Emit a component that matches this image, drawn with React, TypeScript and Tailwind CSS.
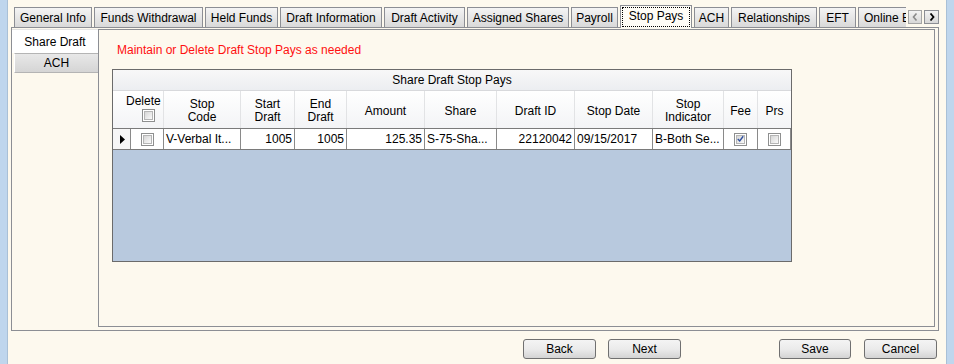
import React from "react"

const tabs = [
    { label: "General Info", w: "w-[78px]" },
    { label: "Funds Withdrawal", w: "w-[109px]" },
    { label: "Held Funds", w: "w-[73px]" },
    { label: "Draft Information", w: "w-[102px]" },
    { label: "Draft Activity", w: "w-[81px]" },
    { label: "Assigned Shares", w: "w-[102px]" },
    { label: "Payroll", w: "w-[47px]" },
    { label: "Stop Pays", w: "w-[72px]", active: true },
    { label: "ACH", w: "w-[35px]" },
    { label: "Relationships", w: "w-[86px]" },
    { label: "EFT", w: "w-[37px]" },
]

function CheckBox({ checked = false }: { checked?: boolean }) {
    return (
        <div className="w-[13px] h-[13px] border border-[#8e8f8f] bg-white p-[1px] shrink-0">
            <div className="w-full h-full border border-[#b5b5b5] bg-linear-to-br from-[#d6d6d6] to-[#fafafa] flex items-center justify-center">
                {checked && (
                    <svg width="9" height="8" viewBox="0 0 9 8">
                        <polyline points="1,4 3.5,6.5 8,0.5" fill="none" stroke="#2f4f9e" strokeWidth="1.8" />
                    </svg>
                )}
            </div>
        </div>
    )
}

function WinButton({ label, className }: { label: string; className: string }) {
    return (
        <button className={`h-[20px] rounded-[3px] border border-[#707070] bg-linear-to-b from-[#f4f4f4] via-[#ebebeb] to-[#d4d4d4] text-[12px] leading-none text-black ${className}`}>
            {label}
        </button>
    )
}

const head = "flex items-center justify-center text-center leading-[13px] border-r border-[#e2e3e5] pt-[3px]"
const cell = "flex items-center border-r border-[#8a8a8a] px-[2px] whitespace-nowrap overflow-hidden"

export default function App() {
    return (
        <div className="w-[954px] h-[364px] flex bg-[#fdf9ee] text-[12px] text-black font-['Liberation_Sans',Arial,sans-serif] overflow-hidden">
            <div className="w-[8px] shrink-0 bg-[#bfd6ed] border-r border-[#a9c0d6]" />

            <div className="w-[938px] flex flex-col">
                {/* top tab strip */}
                <div className="h-[27px] flex items-end pl-[6px] gap-[2px]">
                    {tabs.map((t) =>
                        t.active ? (
                            <div key={t.label} className={`${t.w} h-[23px] -mb-[1px] relative z-10 border border-b-0 border-[#8c8e94] bg-[#fefcf6] p-[1px]`}>
                                <div className="h-full border border-dotted border-black flex items-center justify-center pb-[2px]">{t.label}</div>
                            </div>
                        ) : (
                            <div key={t.label} className={`${t.w} h-[20px] border border-b-0 border-[#8c8e94] bg-linear-to-b from-[#f4f4f4] to-[#d9d9d9] flex items-center justify-center whitespace-nowrap`}>
                                {t.label}
                            </div>
                        )
                    )}
                    <div className="w-[48px] h-[20px] border border-b-0 border-r-0 border-[#8c8e94] bg-linear-to-b from-[#f4f4f4] to-[#d9d9d9] flex items-center pl-[5px] whitespace-nowrap overflow-hidden">
                        Online Banking
                    </div>
                    <div className="flex gap-[2px] mb-[3px]">
                        <div className="w-[14px] h-[14px] border border-[#a5a5a5] bg-linear-to-b from-[#f3f3f3] to-[#d8d8d8] flex items-center justify-center">
                            <svg width="6" height="8" viewBox="0 0 6 8">
                                <polyline points="4.5,0.5 1.5,4 4.5,7.5" fill="none" stroke="#8a8a8a" strokeWidth="1.6" />
                            </svg>
                        </div>
                        <div className="w-[15px] h-[14px] border border-[#8c8e94] bg-linear-to-b from-[#f3f3f3] to-[#d8d8d8] flex items-center justify-center">
                            <svg width="6" height="8" viewBox="0 0 6 8">
                                <polyline points="1.5,0.5 4.5,4 1.5,7.5" fill="none" stroke="#000" strokeWidth="1.8" />
                            </svg>
                        </div>
                    </div>
                </div>

                {/* tab page */}
                <div className="ml-[3px] w-[928px] h-[304px] border border-[#8c8e94] flex pt-[1px]">
                    <div className="w-[86px] flex flex-col">
                        <div className="h-[24px] bg-white flex items-center justify-center border-t border-[#e6e6e6]">Share Draft</div>
                        <div className="ml-[2px] h-[20px] border border-r-0 border-[#b4b4b4] border-l-white bg-linear-to-b from-[#e8e8e8] to-[#d5d5d5] flex items-center justify-center">
                            ACH
                        </div>
                    </div>

                    <div className="w-[837px] h-[298px] border border-[#8c8e94] flex flex-col">
                        <div className="pl-[18px] pt-[13px] leading-[14px] text-[#ff1010]">Maintain or Delete Draft Stop Pays as needed</div>

                        {/* grid */}
                        <div className="ml-[13px] mt-[12px] w-[680px] h-[193px] border border-[#6b6b6b] bg-[#b8c9de] flex flex-col">
                            <div className="h-[21px] shrink-0 bg-linear-to-b from-[#f8f8f8] to-[#eceef1] border-b border-[#d8d9dc] flex items-center justify-center">
                                Share Draft Stop Pays
                            </div>
                            <div className="h-[37px] shrink-0 bg-linear-to-b from-[#ffffff] to-[#f3f4f6] grid grid-cols-[51px_77px_54px_52px_78px_72px_78px_78px_71px_34px_33px]">
                                <div className="flex flex-col items-start pl-[13px] pt-[4px] border-r border-[#e2e3e5] leading-[13px]">
                                    <span>Delete</span>
                                    <div className="ml-[16px] mt-[1px]">
                                        <CheckBox />
                                    </div>
                                </div>
                                <div className={head}>Stop<br />Code</div>
                                <div className={head}>Start<br />Draft</div>
                                <div className={head}>End<br />Draft</div>
                                <div className={head}>Amount</div>
                                <div className={head}>Share</div>
                                <div className={head}>Draft ID</div>
                                <div className={head}>Stop Date</div>
                                <div className={head}>Stop<br />Indicator</div>
                                <div className={head}>Fee</div>
                                <div className={`${head} border-r-0`}>Prs</div>
                            </div>
                            <div className="h-[22px] shrink-0 bg-white border-t border-b border-[#7a7a7a] grid grid-cols-[18px_33px_77px_54px_52px_78px_72px_78px_78px_71px_34px_33px]">
                                <div className="flex items-center justify-center border-r border-[#8a8a8a] bg-[#f6f6f6] pl-[2px]">
                                    <svg width="5" height="9" viewBox="0 0 5 9">
                                        <polygon points="0,0 5,4.5 0,9" fill="#000" />
                                    </svg>
                                </div>
                                <div className={`${cell} justify-center`}>
                                    <CheckBox />
                                </div>
                                <div className={cell}>V-Verbal It...</div>
                                <div className={`${cell} justify-end`}>1005</div>
                                <div className={`${cell} justify-end`}>1005</div>
                                <div className={`${cell} justify-end`}>125.35</div>
                                <div className={cell}>S-75-Sha...</div>
                                <div className={`${cell} justify-end`}>22120042</div>
                                <div className={cell}>09/15/2017</div>
                                <div className={cell}>B-Both Se...</div>
                                <div className={`${cell} justify-center`}>
                                    <CheckBox checked />
                                </div>
                                <div className={`${cell} justify-center`}>
                                    <CheckBox />
                                </div>
                            </div>
                        </div>
                    </div>
                </div>

                {/* buttons */}
                <div className="flex mt-[8px]">
                    <WinButton label="Back" className="ml-[515px] w-[73px]" />
                    <WinButton label="Next" className="ml-[12px] w-[73px]" />
                    <WinButton label="Save" className="ml-[98px] w-[72px]" />
                    <WinButton label="Cancel" className="ml-[13px] w-[73px]" />
                </div>
            </div>

            <div className="w-[8px] shrink-0 bg-[#bfd6ed] border-l border-[#a9c0d6]" />
        </div>
    )
}
